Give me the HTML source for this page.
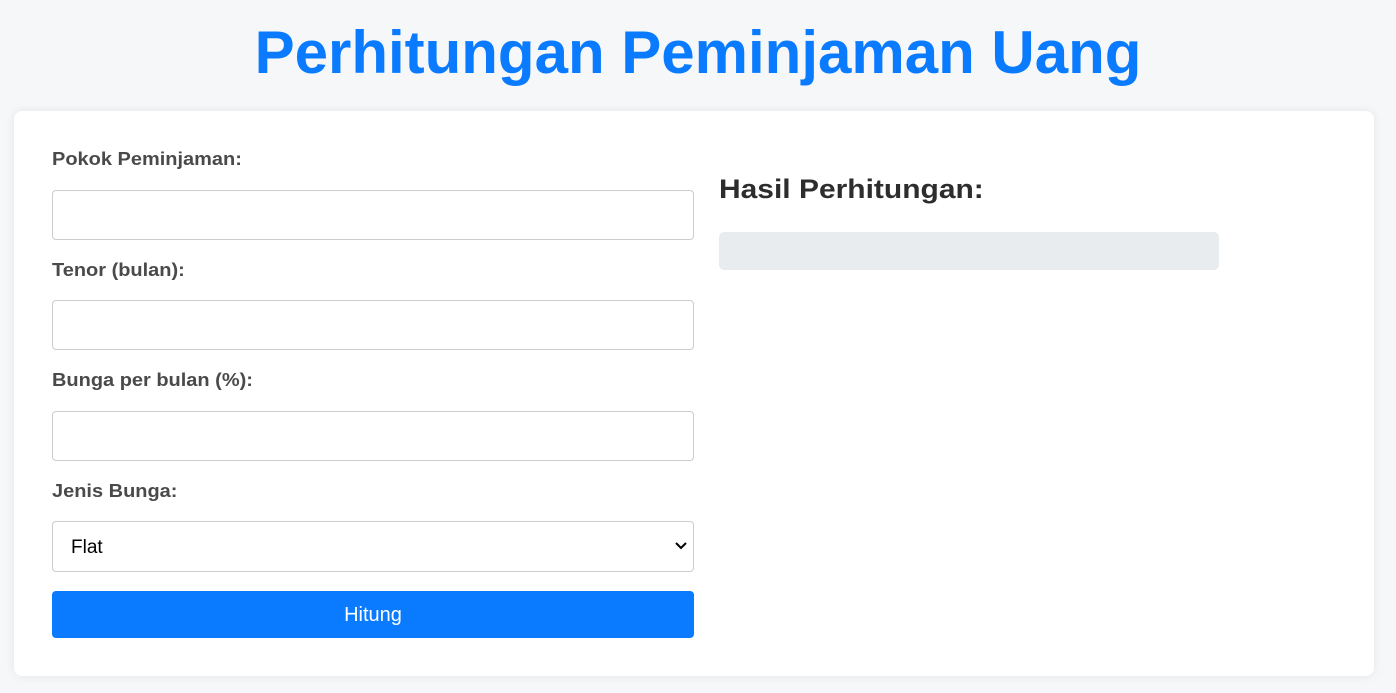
<!DOCTYPE html>
<html><head><meta charset="utf-8"><style>
*{box-sizing:border-box;margin:0;padding:0}
body{width:1396px;height:693px;background:#f5f7f9;font-family:"Liberation Sans",Arial,sans-serif;overflow:hidden;position:relative}
h1{position:absolute;top:15px;left:0;width:1396px;text-align:center;color:#0a7bff;font-size:60px;font-weight:bold;line-height:76px}
.card{position:absolute;left:14px;top:111px;width:1360px;height:565px;background:#fff;border-radius:8px;box-shadow:0 0 10px rgba(0,0,0,0.08)}
label{position:absolute;left:38px;font-size:18px;font-weight:bold;color:#4a4a4a;transform:scaleX(1.11);transform-origin:left}
.in{position:absolute;left:38px;width:642px;height:50px;border:1px solid #cccccc;border-radius:4px;background:#fff}
.sel{font-size:19px;color:#000;padding:15px 0 0 18px}
.chev{position:absolute;right:6px;top:19px}
.btn{position:absolute;left:38px;top:480px;width:642px;height:47px;background:#0a7bff;border-radius:4px;color:#fff;font-size:20px;text-align:center;line-height:49px}
h2{position:absolute;left:705px;top:63px;font-size:27px;font-weight:bold;color:#2d2d2d;transform:scaleX(1.11);transform-origin:left}
.res{position:absolute;left:705px;top:121px;width:500px;height:38px;background:#e8ecef;border-radius:5px}
</style></head><body>
<h1>Perhitungan Peminjaman Uang</h1>
<div class="card">
<label style="top:38px">Pokok Peminjaman:</label>
<div class="in" style="top:79px"></div>
<label style="top:149px">Tenor (bulan):</label>
<div class="in" style="top:189px"></div>
<label style="top:259px">Bunga per bulan (%):</label>
<div class="in" style="top:300px"></div>
<label style="top:370px">Jenis Bunga:</label>
<div class="in sel" style="top:410px;height:51px">Flat<svg class="chev" width="12" height="10" viewBox="0 0 12 10"><path d="M1 2l5 5 5-5" fill="none" stroke="#000" stroke-width="2"/></svg></div>
<div class="btn">Hitung</div>
<h2>Hasil Perhitungan:</h2>
<div class="res"></div>
</div>
</body></html>
